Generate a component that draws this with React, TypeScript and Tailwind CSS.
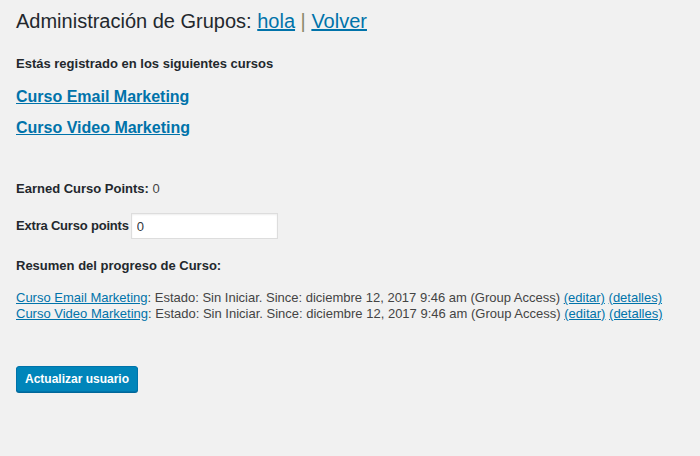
import React from "react";

const courses = ["Curso Email Marketing", "Curso Video Marketing"];

const App: React.FC = () => {
  return (
    <div className="min-h-[456px] w-[700px] bg-[#f1f1f1] px-4 font-['Liberation_Sans',Arial,sans-serif] text-[#444]">
      <h1 className="pt-[9px] text-[20px] leading-[24px] font-normal text-[#23282d]">
        Administración de Grupos:{" "}
        <a className="text-[#0073aa] underline">hola</a>{" "}
        <span className="text-[#8a8a6a]">|</span>{" "}
        <a className="text-[#0073aa] underline">Volver</a>
      </h1>

      <p className="mt-[23px] text-[13px] leading-[16px] font-semibold text-[#23282d]">
        Estás registrado en los siguientes cursos
      </p>

      <ul className="mt-[16px] flex flex-col gap-[13px]">
        {courses.map((c) => (
          <li key={c} className="text-[16px] leading-[18px] font-semibold">
            <a className="text-[#0073aa] underline">{c}</a>
          </li>
        ))}
      </ul>

      <p className="mt-[44px] text-[13px] leading-[16px]">
        <span className="font-semibold text-[#23282d]">Earned Curso Points:</span> 0
      </p>

      <div className="mt-[16px] flex items-center gap-[2px] text-[13px]">
        <label className="font-semibold tracking-[-0.2px] text-[#23282d]">
          Extra Curso points
        </label>
        <input
          defaultValue="0"
          className="h-[26px] w-[147px] border border-[#ddd] bg-white px-[5px] text-[13px] text-[#32373c] shadow-[inset_0_1px_2px_rgba(0,0,0,0.07)] outline-none"
        />
      </div>

      <p className="mt-[19px] text-[13px] leading-[16px] font-semibold text-[#23282d]">
        Resumen del progreso de Curso:
      </p>

      <div className="mt-[16px] text-[13px] leading-[16px]">
        {courses.map((c) => (
          <div key={c}>
            <a className="text-[#0073aa] underline">{c}</a>: Estado: Sin
            Iniciar. Since: diciembre 12, 2017 9:46 am (Group Access){" "}
            <a className="text-[#0073aa] underline">(editar)</a>{" "}
            <a className="text-[#0073aa] underline">(detalles)</a>
          </div>
        ))}
      </div>

      <button className="mt-[44px] h-[26px] rounded-[3px] border border-[#0073aa] bg-[#0085ba] px-[8px] text-[12px] font-semibold text-white shadow-[0_1px_0_#006799]">
        Actualizar usuario
      </button>
    </div>
  );
};

export default App;
